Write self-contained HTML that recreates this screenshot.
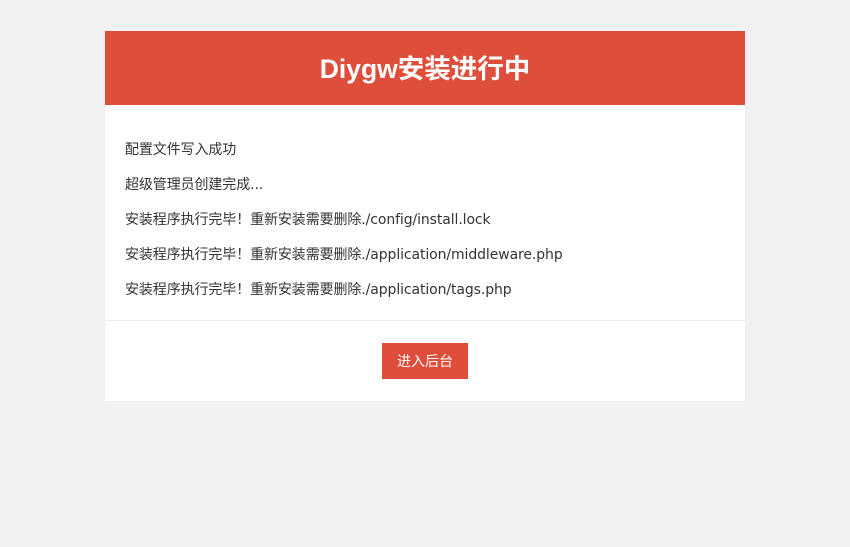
<!DOCTYPE html>
<html><head><meta charset="utf-8"><style>
body{margin:0;background:#f1f1f1;font-family:"Liberation Sans","Noto Sans CJK SC",sans-serif;}
.card{position:absolute;left:105px;top:31px;width:640px;height:370px;background:#fff;}
.hd{height:74px;background:#de4e3b;color:#fff;font-size:26.5px;font-weight:bold;text-align:center;line-height:77px;}
.bd{position:absolute;left:20px;top:106px;}
.bd p{margin:0;position:absolute;white-space:nowrap;font-size:14px;color:#333;line-height:20px;font-family:"DejaVu Sans","Noto Sans CJK SC",sans-serif;letter-spacing:-0.1px;}
.hr{position:absolute;left:0;top:289px;width:640px;height:1px;background:#ececec;}
.btn{position:absolute;left:277px;top:312px;width:86px;height:36px;background:#de4e3b;color:#fff;font-size:14px;line-height:37px;text-align:center;}
</style></head><body>
<div class="card">
<div class="hd">Diygw安装进行中</div>
<div class="bd">
<p style="top:3px">配置文件写入成功</p>
<p style="top:38px">超级管理员创建完成...</p>
<p style="top:73px">安装程序执行完毕！重新安装需要删除./config/install.lock</p>
<p style="top:108px">安装程序执行完毕！重新安装需要删除./application/middleware.php</p>
<p style="top:143px">安装程序执行完毕！重新安装需要删除./application/tags.php</p>
</div>
<div class="hr"></div>
<div class="btn">进入后台</div>
</div>
</body></html>
